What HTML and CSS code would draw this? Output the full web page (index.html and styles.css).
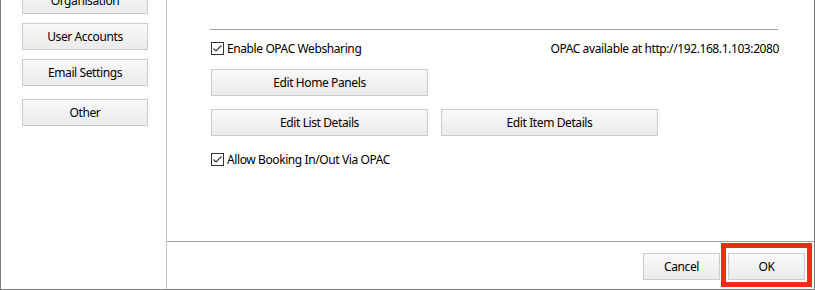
FILE: index.html
```html
<!DOCTYPE html>
<html>
<head>
<meta charset="utf-8">
<link rel="stylesheet" href="styles.css">
</head>
<body>
<div class="window">
  <div class="main">
    <div class="sidebar">
      <button class="btn side-btn first">Organisation</button>
      <button class="btn side-btn">User Accounts</button>
      <button class="btn side-btn">Email Settings</button>
      <button class="btn side-btn other">Other</button>
    </div>
    <div class="pane">
      <div class="content">
        <div class="sep"></div>
        <div class="row-top">
          <label class="check"><span class="box"><svg width="11" height="11" viewBox="0 0 11 11"><path d="M1.5 5.5 L4 8 L9.5 2.5" fill="none" stroke="#333" stroke-width="1.1"/></svg></span>Enable OPAC Websharing</label>
          <span class="url">OPAC available at http://192.168.1.103:2080</span>
        </div>
        <div class="btn-row first-row">
          <button class="btn wide">Edit Home Panels</button>
        </div>
        <div class="btn-row">
          <button class="btn wide">Edit List Details</button>
          <button class="btn wide">Edit Item Details</button>
        </div>
        <label class="check booking"><span class="box"><svg width="11" height="11" viewBox="0 0 11 11"><path d="M1.5 5.5 L4 8 L9.5 2.5" fill="none" stroke="#333" stroke-width="1.1"/></svg></span>Allow Booking In/Out Via OPAC</label>
      </div>
      <div class="footer">
        <button class="btn foot-btn">Cancel</button>
        <div class="ok-wrap">
          <button class="btn foot-btn">OK</button>
          <div class="highlight"></div>
        </div>
      </div>
    </div>
  </div>
</div>
</body>
</html>
```
FILE: styles.css
```css
* { box-sizing: border-box; }
html, body { margin: 0; padding: 0; background: #fff; }
body {
  font-family: "Noto Sans", "Open Sans", sans-serif;
  font-size: 12px;
  letter-spacing: -0.4px;
  color: #000;
  overflow: hidden;
}
.window {
  width: 815px;
  height: 290px;
  border-left: 1px solid #7a7a7a;
  border-right: 1px solid #7a7a7a;
  border-bottom: 1px solid #7a7a7a;
  background: #fff;
  overflow: hidden;
}
.main {
  display: flex;
  height: 289px;
}
.sidebar {
  width: 166px;
  border-right: 1px solid #c8c8c8;
  display: flex;
  flex-direction: column;
  align-items: flex-start;
  padding-left: 21px;
  gap: 9px;
}
.btn {
  font-family: inherit;
  font-size: 12px;
  letter-spacing: -0.4px;
  color: #000;
  border: 1px solid #cbcbcb;
  background: linear-gradient(#f9f9f9, #ebebeb);
  height: 27px;
  padding: 1px 0 0 0;
  margin: 0;
  line-height: 24px;
  text-align: center;
  border-radius: 0;
}
.side-btn { width: 126px; }
.side-btn.first { margin-top: -13px; }
.side-btn.other { margin-top: 4px; }
.pane {
  flex: 1;
  display: flex;
  flex-direction: column;
}
.content {
  height: 241px;
  padding: 29px 36px 0 43px;
}
.sep {
  height: 1px;
  background: #a0a0a0;
}
.row-top {
  display: flex;
  justify-content: space-between;
  align-items: center;
  margin-top: 9px;
  height: 18px;
}
.check {
  display: flex;
  align-items: center;
  gap: 3px;
}
.box {
  width: 13px;
  height: 13px;
  border: 1px solid #333;
  display: flex;
  align-items: center;
  justify-content: center;
  background: #fff;
  margin-left: 1px;
}
.url { margin-right: -1px; }
.btn-row {
  display: flex;
  gap: 13px;
  margin-top: 13px;
  padding-left: 1px;
}
.btn-row.first-row { margin-top: 12px; }
.wide { width: 217px; }
.booking { margin-top: 14px; height: 18px; }
.footer {
  flex: 1;
  border-top: 1px solid #a0a0a0;
  display: flex;
  justify-content: flex-end;
  align-items: flex-start;
  padding-top: 11px;
  padding-right: 9px;
  gap: 8px;
}
.foot-btn { width: 77px; }
.ok-wrap { position: relative; }
.highlight {
  position: absolute;
  left: -7px;
  top: -10px;
  right: -7px;
  bottom: -7px;
  border: 5px solid #f52a10;
}
```
